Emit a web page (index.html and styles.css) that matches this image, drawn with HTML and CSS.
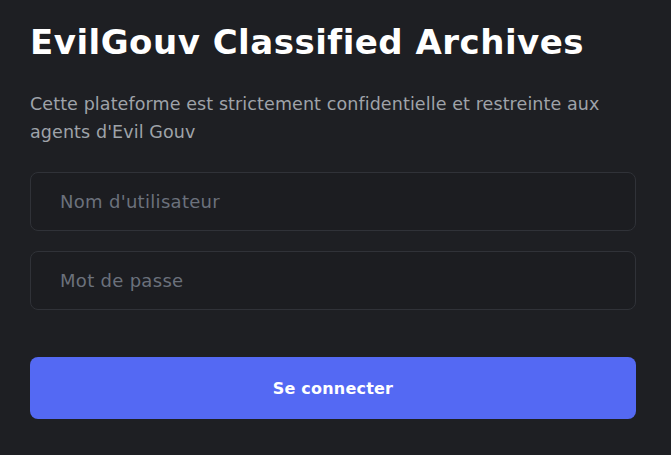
FILE: index.html
```html
<!DOCTYPE html>
<html lang="fr">
<head>
<meta charset="utf-8">
<title>EvilGouv Classified Archives</title>
<link rel="stylesheet" href="styles.css">
</head>
<body>
<main class="login">
  <h1 class="title">EvilGouv Classified Archives</h1>
  <p class="subtitle">Cette plateforme est strictement confidentielle et restreinte aux agents d'Evil Gouv</p>
  <form class="form">
    <input class="field" type="text" placeholder="Nom d'utilisateur">
    <input class="field" type="password" placeholder="Mot de passe">
    <button class="submit" type="button">Se connecter</button>
  </form>
</main>
</body>
</html>
```
FILE: styles.css
```css
html, body {
  margin: 0;
  background: #1e1f23;
}
.login {
  width: 606px;
  padding: 20px 0 0 30px;
  font-family: "DejaVu Sans", "Noto Sans", sans-serif;
}
.title {
  margin: 0;
  font-size: 34px;
  line-height: 44px;
  font-weight: 800;
  color: #ffffff;
  letter-spacing: 0.5px;
}
.subtitle {
  margin: 26px 0 0;
  font-size: 17.5px;
  line-height: 28px;
  color: #9fa3a9;
  letter-spacing: 0.1px;
}
.form {
  display: flex;
  flex-direction: column;
  gap: 20px;
  margin-top: 26px;
}
.field {
  box-sizing: border-box;
  height: 59px;
  width: 100%;
  padding: 0 29px;
  background: #1c1d21;
  border: 1px solid #303238;
  border-radius: 8px;
  font-family: inherit;
  font-size: 18px;
  letter-spacing: 0.3px;
  color: #ffffff;
  outline: none;
}
.field::placeholder {
  color: #6b717c;
  opacity: 1;
}
.submit {
  margin-top: 27px;
  height: 62px;
  width: 100%;
  border: none;
  border-radius: 8px;
  background: #5469f3;
  color: #ffffff;
  font-family: "DejaVu Sans", sans-serif;
  font-size: 16px;
  font-weight: 700;
  letter-spacing: 0.2px;
}
```
